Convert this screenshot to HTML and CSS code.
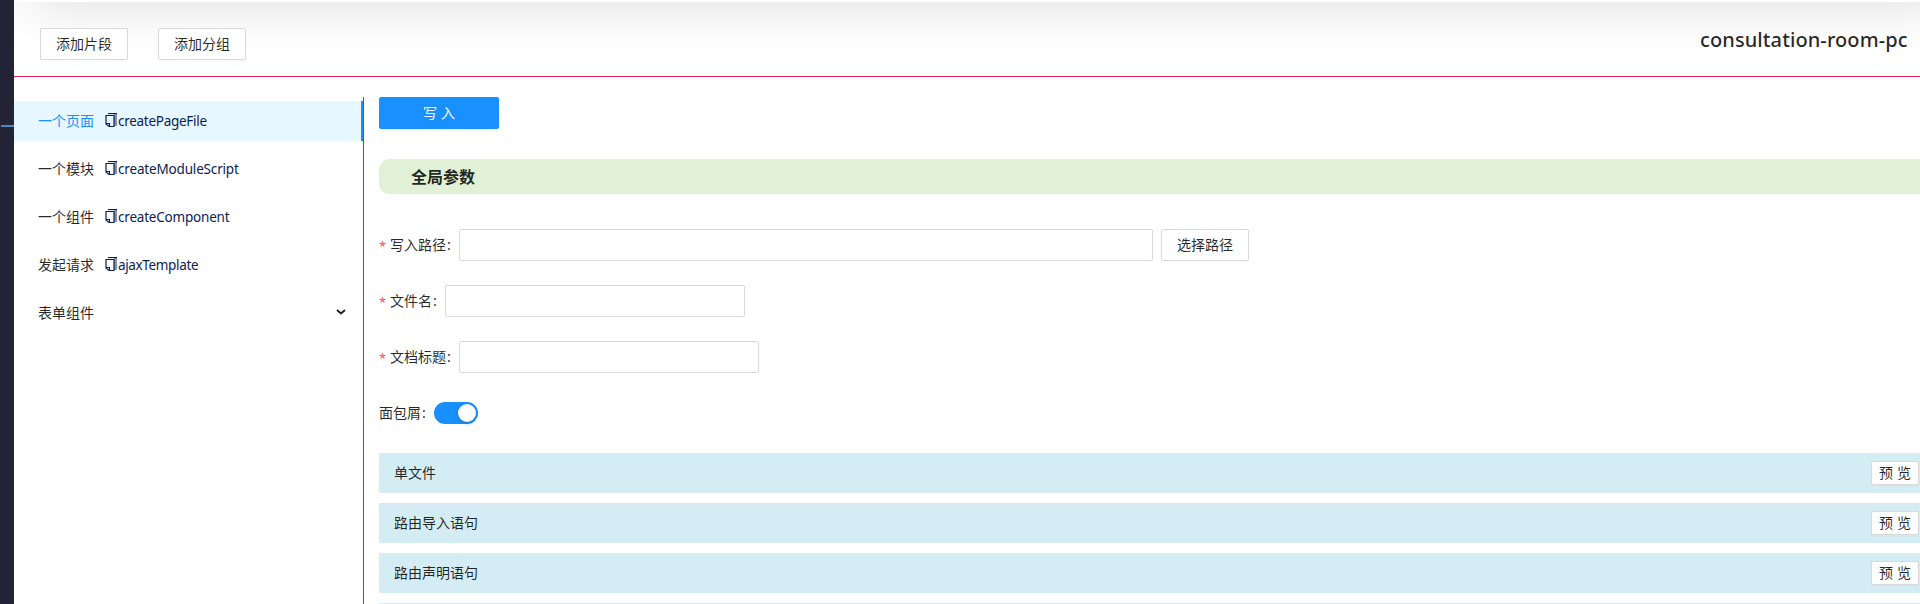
FILE: index.html
```html
<!DOCTYPE html>
<html lang="zh-CN">
<head>
<meta charset="utf-8">
<title>consultation-room-pc</title>
<link rel="stylesheet" href="styles.css">
</head>
<body>
<svg width="0" height="0" class="defs">
  <symbol id="copy" viewBox="0 0 13 15">
    <path class="copy-back" d="M9 1h3v12H9z"/>
    <path class="copy-top" d="M3 .5h9"/>
    <path class="copy-line" d="M9 2.5H1v8.5L4 13.5h5V2.5M1 10.5h3.5v3"/>
  </symbol>
</svg>
<div class="app">
  <div class="rail"><span class="rail-mark"></span></div>
  <div class="page">
    <header class="header">
      <div class="actions">
        <button class="btn">添加片段</button>
        <button class="btn">添加分组</button>
      </div>
      <h1 class="project">consultation-room-pc</h1>
    </header>
    <div class="body">
      <nav class="menu">
        <div class="item active"><span class="name">一个页面</span><a class="code"><svg><use href="#copy"/></svg><span class="c1">createPageFile</span></a></div>
        <div class="item"><span class="name">一个模块</span><a class="code"><svg><use href="#copy"/></svg><span class="c2">createModuleScript</span></a></div>
        <div class="item"><span class="name">一个组件</span><a class="code"><svg><use href="#copy"/></svg><span class="c3">createComponent</span></a></div>
        <div class="item"><span class="name">发起请求</span><a class="code"><svg><use href="#copy"/></svg><span class="c4">ajaxTemplate</span></a></div>
        <div class="item"><span class="name">表单组件</span><svg class="arrow" viewBox="0 0 10 6"><path d="M1 1l4 3.5L9 1"/></svg></div>
      </nav>
      <main class="content">
        <button class="btn primary">写 入</button>
        <h2 class="section">全局参数</h2>
        <div class="field"><label class="required">写入路径<i>:</i></label><input class="input wide"><button class="btn pick">选择路径</button></div>
        <div class="field"><label class="required">文件名<i>:</i></label><input class="input"></div>
        <div class="field"><label class="required">文档标题<i>:</i></label><input class="input"></div>
        <div class="field"><label>面包屑<i>:</i></label><span class="switch"></span></div>
        <div class="files">
          <div class="file"><span>单文件</span><button class="btn small">预 览</button></div>
          <div class="file"><span>路由导入语句</span><button class="btn small">预 览</button></div>
          <div class="file"><span>路由声明语句</span><button class="btn small">预 览</button></div>
          <div class="file"></div>
        </div>
      </main>
    </div>
  </div>
</div>
</body>
</html>
```
FILE: styles.css
```css
* { box-sizing: border-box; }
body {
  margin: 0;
  height: 604px;
  overflow: hidden;
  background: #fff;
  color: rgba(0, 0, 0, .85);
  font: 14px/22px "Noto Sans", "Noto Sans CJK SC", sans-serif;
}
.defs { position: absolute; }
.app { display: flex; height: 604px; overflow: hidden; }
.rail { width: 14px; flex: none; padding: 125px 0 0 1px; background: #222436; }
.rail-mark { display: block; height: 2px; background: #5585c5; }
.page { flex: 1; min-width: 0; }
.header {
  position: relative;
  display: flex;
  justify-content: space-between;
  height: 77px;
  padding: 28px 12px 0 26px;
  border-bottom: 1px solid #e02860;
  overflow: hidden;
}
.header::before {
  content: "";
  position: absolute;
  left: 18px;
  right: -22px;
  top: -100px;
  height: 102px;
  background: #fff;
  box-shadow: 0 2px 56px rgba(0, 0, 0, .145);
}
.header::after {
  content: "";
  position: absolute;
  left: 0;
  right: 0;
  top: 0;
  height: 2px;
  background: #fff;
}
.actions { position: relative; display: flex; gap: 30px; }
.btn {
  height: 32px;
  padding: 0 15px 2px;
  border: 1px solid #d9d9d9;
  border-radius: 2px;
  background: #fff;
  box-shadow: 0 2px 0 rgba(0, 0, 0, .016);
  color: inherit;
  font: 14px/22px "Noto Sans CJK SC", sans-serif;
  white-space: nowrap;
}
.project {
  position: relative;
  width: 208px;
  margin: -4px 0 0;
  font: 500 20px/32px "Noto Sans", sans-serif;
  letter-spacing: .1px;
  white-space: nowrap;
}
.body { display: flex; padding-top: 20px; }
.menu {
  display: flex;
  flex: none;
  flex-direction: column;
  gap: 8px;
  width: 350px;
  height: 507px;
  padding-top: 4px;
  border-right: 1px solid #5b4bb5;
}
.item { display: flex; align-items: center; height: 40px; padding-left: 24px; }
.active { background: #e6f7ff; border-right: 2px solid #1890ff; }
.active .name { color: #1890ff; }
.name { width: 67px; }
.code { display: flex; align-items: center; color: #0b1d55; }
.code svg { width: 13px; height: 15px; margin-top: -2px; }
.code span { white-space: nowrap; font-size: 13.5px; }
.c1 { letter-spacing: -.28px; }
.c2 { letter-spacing: -.17px; }
.c3 { letter-spacing: -.2px; }
.c4 { letter-spacing: -.35px; }
.copy-back { fill: #8490ae; }
.copy-top, .copy-line { fill: none; stroke: #0b1d55; stroke-width: 1.2; }
.arrow { width: 10px; height: 6px; margin: -2px 17px 0 auto; fill: none; stroke: #222; stroke-width: 2; }
.content { flex: 1; min-width: 0; padding-left: 15px; }
.primary { display: block; width: 120px; border-color: #1890ff; background: #1890ff; color: #fff; word-spacing: 1px; }
.section {
  height: 35px;
  margin: 30px 0 35px;
  padding-left: 32px;
  border-radius: 10px 0 0 10px;
  background: #e1f1d6;
  font: 700 16px/35px "Noto Sans CJK SC", sans-serif;
}
.field { display: flex; align-items: center; height: 32px; margin-bottom: 24px; }
label { display: flex; white-space: nowrap; }
label i { width: 13px; padding-left: 1px; font-style: normal; }
.required::before { content: "*"; width: 11px; padding-top: 1px; color: #ff4d4f; font-size: 13px; }
.input { width: 300px; height: 32px; padding: 4px 11px; border: 1px solid #d9d9d9; border-radius: 2px; background: #fff; }
.wide { width: 694px; }
.pick { margin-left: 8px; }
.switch { display: flex; justify-content: flex-end; width: 44px; height: 22px; padding: 2px; border-radius: 11px; background: #1890ff; }
.switch::before { content: ""; width: 18px; height: 18px; border-radius: 50%; background: #fff; box-shadow: 0 2px 4px rgba(0, 35, 11, .2); }
.files { display: flex; flex-direction: column; gap: 10px; }
.file { display: flex; align-items: center; justify-content: space-between; height: 40px; padding: 0 1px 0 15px; background: #d4ecf3; }
.small { width: 48px; height: 24px; padding: 0 0 2px; line-height: 20px; word-spacing: 1px; }
```
